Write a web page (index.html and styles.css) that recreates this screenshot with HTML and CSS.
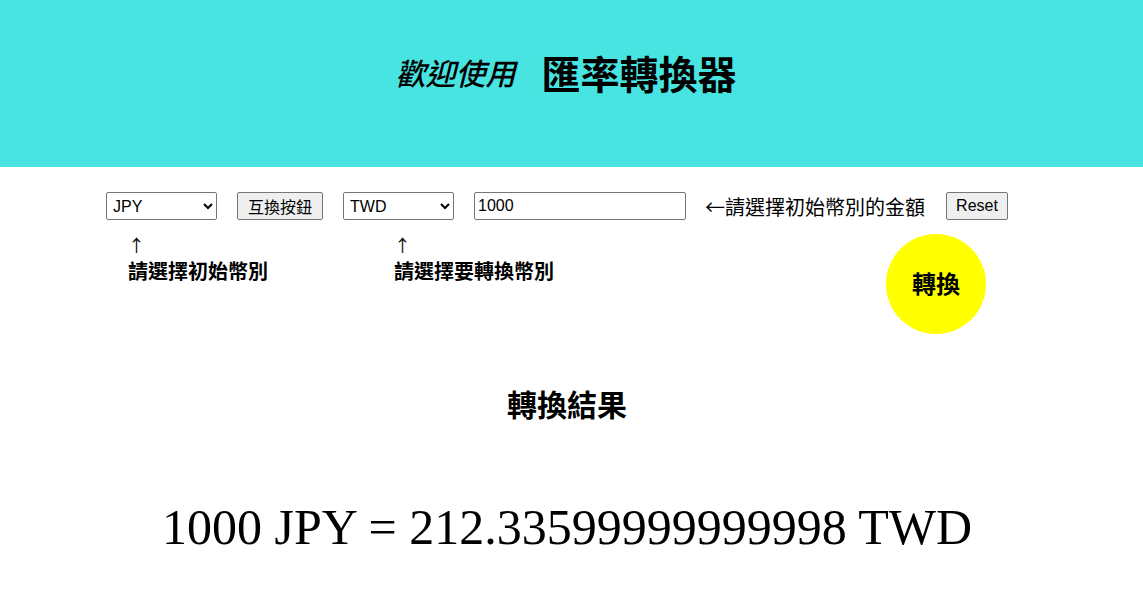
FILE: index.html
```html
<!DOCTYPE html>
<html lang="zh-Hant">
<head>
<meta charset="utf-8">
<title>匯率轉換器</title>
<link rel="stylesheet" href="styles.css">
</head>
<body>
<header class="hero">
  <h1 class="hero-title"><em class="welcome">歡迎使用</em><span class="brand">匯率轉換器</span></h1>
</header>
<main class="converter">
  <div class="controls">
    <select class="currency">
      <option>JPY</option>
      <option>TWD</option>
      <option>USD</option>
    </select>
    <button class="btn btn-swap">互換按鈕</button>
    <select class="currency">
      <option>TWD</option>
      <option>JPY</option>
      <option>USD</option>
    </select>
    <input class="amount" type="text" value="1000">
    <span class="amount-hint">←請選擇初始幣別的金額</span>
    <button class="btn btn-reset">Reset</button>
  </div>
  <div class="hints">
    <div class="hint hint-from"><span class="arrow">↑</span><span class="hint-label">請選擇初始幣別</span></div>
    <div class="hint hint-to"><span class="arrow">↑</span><span class="hint-label">請選擇要轉換幣別</span></div>
    <button class="convert">轉換</button>
  </div>
</main>
<section class="result">
  <h2 class="result-title">轉換結果</h2>
  <p class="result-value">1000 JPY = 212.33599999999998 TWD</p>
</section>
</body>
</html>
```
FILE: styles.css
```css
html, body {
  margin: 0;
  padding: 0;
  background: #ffffff;
  color: #000000;
}
body {
  font-family: "Noto Sans CJK TC", "Noto Sans", sans-serif;
}
.hero {
  height: 167px;
  box-sizing: border-box;
  background: #48e4e2;
  display: flex;
  align-items: center;
  justify-content: center;
  padding: 0 9px 23px 0;
}
.hero-title {
  margin: 0;
  display: flex;
  align-items: center;
  gap: 26px;
  font-weight: normal;
}
.welcome {
  font-size: 30px;
  font-style: italic;
  font-weight: 500;
  margin-left: -2px;
}
.brand {
  font-size: 39px;
  font-weight: 700;
}
.converter {
  width: 902px;
  margin: 0 0 0 106px;
}
.controls {
  display: flex;
  align-items: center;
  gap: 20px;
  margin-top: 25px;
  height: 28px;
}
.currency {
  width: 111px;
  height: 28px;
  box-sizing: border-box;
  font-family: "Liberation Sans", Arial, sans-serif;
  font-size: 16px;
  border: 1px solid #767676;
  border-radius: 2px;
  background: #fff;
  padding: 0 2px;
}
.btn {
  height: 28px;
  box-sizing: border-box;
  font-family: "Liberation Sans", "Noto Sans CJK TC", sans-serif;
  font-size: 16px;
  padding: 0;
  border: 1px solid #767676;
  border-radius: 2px;
  background: #efefef;
  color: #000;
}
.btn-swap {
  width: 86px;
}
.btn-reset {
  width: 62px;
}
.amount {
  width: 212px;
  height: 28px;
  box-sizing: border-box;
  font-family: "Liberation Sans", Arial, sans-serif;
  font-size: 16px;
  border: 1px solid #767676;
  border-radius: 2px;
  padding: 0 3px;
}
.amount-hint {
  font-size: 20px;
  margin-left: -1px;
  margin-right: 1px;
  white-space: nowrap;
}
.hints {
  display: flex;
  align-items: flex-start;
  margin-top: 14px;
}
.hint {
  display: flex;
  flex-direction: column;
  font-size: 20px;
  font-weight: 700;
}
.hint-from {
  margin-left: 22px;
  width: 266px;
}
.arrow {
  font-weight: 400;
  font-size: 17px;
  line-height: 22px;
}
.hint-label {
  line-height: 28px;
  margin-top: 1px;
}
.convert {
  margin-left: auto;
  margin-right: 22px;
  width: 100px;
  height: 100px;
  border-radius: 50%;
  border: none;
  background: #ffff00;
  font-family: "Noto Sans CJK TC", sans-serif;
  font-size: 24px;
  font-weight: 700;
  color: #000;
  padding: 0 0 4px;
}
.result {
  text-align: center;
  padding-right: 9px;
}
.result-title {
  margin: 53px 0 0;
  font-size: 30px;
  font-weight: 700;
  line-height: 32px;
}
.result-value {
  margin: 80px 0 0;
  font-family: "Liberation Serif", "Times New Roman", serif;
  font-size: 50px;
  line-height: 57px;
}
```
